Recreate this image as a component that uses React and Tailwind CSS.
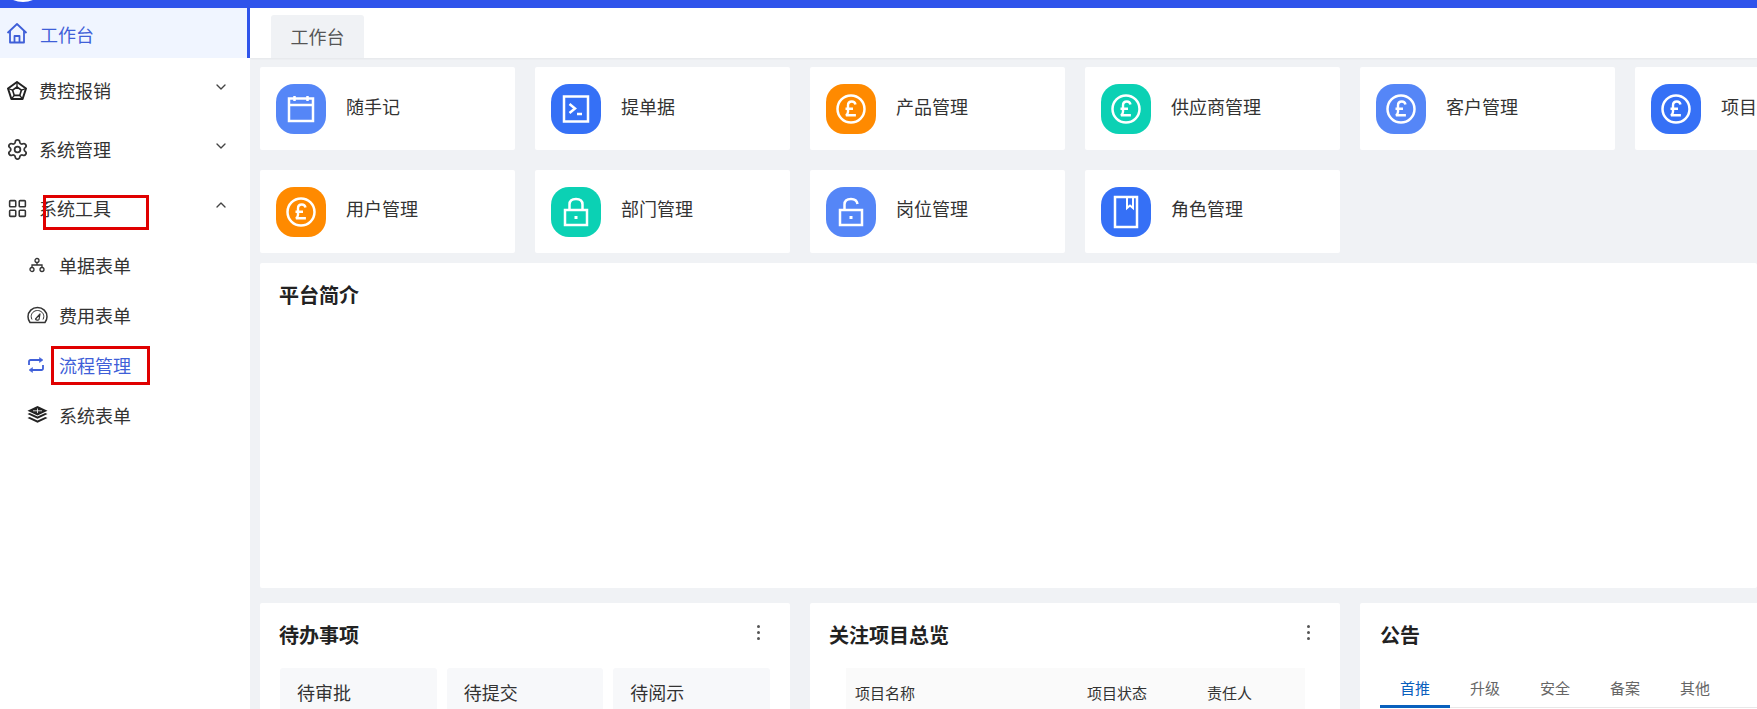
import { ChevronDown, ChevronUp, Settings, LayoutGrid } from "lucide-react"

const font = { fontFamily: '"Noto Sans CJK SC", "Noto Sans", sans-serif' }

function PoundIcon() {
  return (
    <svg width="34" height="34" viewBox="0 0 34 34" fill="none" stroke="white">
      <circle cx="17" cy="17" r="13.5" strokeWidth="2.500" />
      <path d="M21.500 12.500c-.4-1.800-1.800-3-3.600-3-2.400 0-3.900 1.600-3.900 3.900v6.400c0 1.600-.7 2.700-2.100 3.400h10M11.500 16.800h7.500" strokeWidth="2.400" />
    </svg>
  )
}

function CalendarIcon() {
  return (
    <svg width="28" height="30" viewBox="0 0 28 30" fill="none" stroke="white" strokeWidth="2.500">
      <rect x="2" y="4.500" width="24" height="22.500" />
      <path d="M2 11h24M7.500 2v5M20.500 2v5" />
    </svg>
  )
}

function TerminalIcon() {
  return (
    <svg width="28" height="30" viewBox="0 0 28 30" fill="none" stroke="white" strokeWidth="2.500">
      <rect x="2" y="2.500" width="24" height="25" />
      <path d="M7.500 10l5.500 4.500-5.500 4.500M15 20h5" />
    </svg>
  )
}

function LockIcon() {
  return (
    <svg width="26" height="30" viewBox="0 0 26 30" fill="none" stroke="white" strokeWidth="2.500">
      <rect x="2" y="13" width="22" height="15" />
      <path d="M6.500 13V7.500C6.500 4 9 2 13 2s6.500 2 6.500 5.500V13" />
      <path d="M13 19v3" strokeWidth="3" />
    </svg>
  )
}

function UnlockIcon() {
  return (
    <svg width="26" height="30" viewBox="0 0 26 30" fill="none" stroke="white" strokeWidth="2.500">
      <rect x="2" y="13" width="22" height="15" />
      <path d="M6.500 13V7.500C6.500 4 9 2 13 2s6 1.500 6.500 5" />
      <path d="M13 19v3" strokeWidth="3" />
    </svg>
  )
}

function BookIcon() {
  return (
    <svg width="26" height="34" viewBox="0 0 26 34" fill="none" stroke="white" strokeWidth="2.500">
      <rect x="2" y="2" width="22" height="30" />
      <path d="M14 2v11l3-2.500 3 2.500V2" strokeWidth="2" />
    </svg>
  )
}

function HomeIcon() {
  return (
    <svg width="22" height="22" viewBox="0 0 22 22" fill="none" stroke="currentColor" strokeWidth="1.800" strokeLinejoin="round">
      <path d="M1.500 11L11 2l9.500 9" />
      <path d="M4 9v11.500h14V9" />
      <path d="M8.500 20.500v-6.500h5v6.500" />
    </svg>
  )
}

function PentagonIcon() {
  return (
    <svg width="20" height="20" viewBox="0 0 20 20" fill="none" stroke="#222" strokeWidth="2" strokeLinejoin="round">
      <path d="M10 1l9 6.500-3.400 10.500H4.400L1 7.500z" />
      <path d="M10 6l4.400 3.200-1.700 5.200H7.300L5.600 9.200z" strokeWidth="1.600" />
      <path d="M10 1v5M19 7.500l-4.600 1.700M15.600 18l-2.900-3.600M4.400 18l2.900-3.600M1 7.500l4.600 1.700" strokeWidth="1.300" />
    </svg>
  )
}

function NodesIcon() {
  return (
    <svg width="16" height="16" viewBox="0 0 16 16" fill="none" stroke="#333" strokeWidth="1.300" className="ml-[2px]">
      <circle cx="8" cy="3.500" r="2" />
      <circle cx="3" cy="12.500" r="2" />
      <circle cx="13" cy="12.500" r="2" />
      <path d="M8 5.500V8M3 10.500V8h10v2.500" />
    </svg>
  )
}

function GaugeIcon() {
  return (
    <svg width="21" height="18" viewBox="0 0 21 18" fill="none" stroke="#333" strokeWidth="1.500" strokeLinejoin="round">
      <path d="M3 16.500C1.700 14.800 1 13 1 10.800 1 5.500 5.200 1.500 10.500 1.500S20 5.500 20 10.800c0 2.200-.7 4-2 5.700z" />
      <path d="M5 13.500c-.5-1-.8-2-.8-3 0-3.400 2.800-6 6.300-6s6.300 2.600 6.300 6c0 1-.3 2-.8 3" strokeWidth="1" />
      <path d="M8.500 13l4.500-5-1 5.500c-.6 1-3.200.8-3.500-.5z" strokeWidth="1.200" />
    </svg>
  )
}

function LoopIcon() {
  return (
    <svg width="18" height="18" viewBox="0 0 18 18" fill="none" stroke="currentColor" strokeWidth="1.800">
      <path d="M2 9V5.500A1.500 1.500 0 013.500 4H13" />
      <path d="M16 9v3.500a1.500 1.500 0 01-1.500 1.500H5" />
      <path d="M12.500 1.500L16 4l-3.500 2.500z" fill="currentColor" strokeWidth="0.500" />
      <path d="M5.500 11.500L2 14l3.500 2.500z" fill="currentColor" strokeWidth="0.500" />
    </svg>
  )
}

function StackIcon() {
  return (
    <svg width="21" height="19" viewBox="0 0 21 19" fill="#222">
      <path d="M10.500 0l10 4.800-10 4.800L.5 4.800z" />
      <path d="M6 4.800h9M10.500 2.500v4.600" stroke="white" strokeWidth="0.800" />
      <path d="M.5 8l2.200-1.100 7.800 3.700 7.800-3.700L20.500 8l-10 4.800z" />
      <path d="M.5 12l2.200-1.100 7.800 3.700 7.800-3.700 2.200 1.100-10 4.800z" />
    </svg>
  )
}

const shortcuts = [
  [
    { name: "随手记", bg: "bg-[#5586f7]", icon: <CalendarIcon /> },
    { name: "提单据", bg: "bg-[#3570f6]", icon: <TerminalIcon /> },
    { name: "产品管理", bg: "bg-[#ff8a00]", icon: <PoundIcon /> },
    { name: "供应商管理", bg: "bg-[#0bd1b4]", icon: <PoundIcon /> },
    { name: "客户管理", bg: "bg-[#5586f7]", icon: <PoundIcon /> },
    { name: "项目管理", bg: "bg-[#3570f6]", icon: <PoundIcon /> },
  ],
  [
    { name: "用户管理", bg: "bg-[#ff8a00]", icon: <PoundIcon /> },
    { name: "部门管理", bg: "bg-[#0bd1b4]", icon: <LockIcon /> },
    { name: "岗位管理", bg: "bg-[#5586f7]", icon: <UnlockIcon /> },
    { name: "角色管理", bg: "bg-[#3570f6]", icon: <BookIcon /> },
  ],
]

function MenuRow({ icon, label, open }) {
  return (
    <div className="h-[59px] flex items-center pl-[7px] pr-[21px] text-[18px] text-[#333]">
      <span className="w-[32px] flex">{icon}</span>
      <span className="flex-1">{label}</span>
      {open ? (
        <ChevronUp size={16} className="-mt-[8px] text-[#444]" />
      ) : (
        <ChevronDown size={16} className="-mt-[8px] text-[#444]" />
      )}
    </div>
  )
}

function SubRow({ icon, label, active }) {
  return (
    <div className={`h-[50px] flex items-center pl-[27px] text-[18px] ${active ? "text-[#3f5fd8]" : "text-[#333]"}`}>
      <span className="w-[32px] flex">{icon}</span>
      <span>{label}</span>
    </div>
  )
}

function Dots() {
  return (
    <div className="flex flex-col gap-[3px] mt-[-6px]">
      <span className="w-[3px] h-[3px] rounded-full bg-[#555]"></span>
      <span className="w-[3px] h-[3px] rounded-full bg-[#555]"></span>
      <span className="w-[3px] h-[3px] rounded-full bg-[#555]"></span>
    </div>
  )
}

export default function App() {
  return (
    <div className="relative w-[1757px] h-[709px] overflow-hidden flex flex-col bg-white" style={font}>
      <div className="h-[8px] shrink-0 bg-[#2f54eb] flex items-start overflow-hidden">
        <div className="ml-[-3px] -mt-[50px] w-[52px] h-[52px] shrink-0 rounded-full bg-white"></div>
      </div>
      <div className="flex flex-1 min-h-0">
        <aside className="w-[250px] shrink-0 bg-white">
          <div className="h-[50px] flex items-center pl-[6px] bg-[#f0f5ff] border-r-[3px] border-[#2f54eb] text-[18px] text-[#3f5fd8]">
            <span className="w-[34px] flex">
              <HomeIcon />
            </span>
            <span className="pt-[2px]">工作台</span>
          </div>
          <div className="pt-[3px]">
            <MenuRow icon={<PentagonIcon />} label="费控报销" />
            <MenuRow icon={<Settings size={23} strokeWidth={1.8} className="-ml-[1px]" />} label="系统管理" />
            <MenuRow icon={<LayoutGrid size={21} strokeWidth={1.8} />} label="系统工具" open />
          </div>
          <div className="pt-[2px]">
            <SubRow icon={<NodesIcon />} label="单据表单" />
            <SubRow icon={<GaugeIcon />} label="费用表单" />
            <SubRow icon={<LoopIcon />} label="流程管理" active />
            <SubRow icon={<StackIcon />} label="系统表单" />
          </div>
        </aside>
        <main className="flex-1 min-w-0 bg-[#f0f2f5] overflow-hidden">
          <div className="h-[50px] bg-white pt-[7px] pl-[21px] shadow-[0_1px_2px_rgba(0,0,0,0.05)]">
            <div className="w-[93px] h-[43px] flex items-center justify-center rounded-t-[3px] bg-[#f0f2f5] text-[18px] text-[#555]">
              工作台
            </div>
          </div>
          <div className="pl-[10px] pt-[9px]">
            <div className="flex flex-col gap-[20px]">
              {shortcuts.map((row, i) => (
                <div key={i} className="flex gap-[20px]">
                  {row.map((item) => (
                    <div key={item.name} className="w-[255px] h-[83px] shrink-0 flex items-center gap-[20px] pl-[16px] rounded-[2px] bg-white">
                      <div className={`w-[50px] h-[50px] flex items-center justify-center rounded-[18px] ${item.bg}`}>
                        {item.icon}
                      </div>
                      <span className={`${i === 0 ? "pb-[4px]" : "pb-[7px]"} text-[18px] text-[#333]`}>{item.name}</span>
                    </div>
                  ))}
                </div>
              ))}
            </div>
            <div className="mt-[10px] h-[325px] pl-[19px] pt-[19px] bg-white rounded-[2px]">
              <h3 className="text-[20px] font-bold leading-[26px] text-[#222]">平台简介</h3>
            </div>
            <div className="mt-[15px] flex gap-[20px]">
              <div className="w-[530px] h-[200px] shrink-0 bg-white rounded-[2px] px-[20px] pt-[19px]">
                <div className="flex items-center justify-between pr-[10px]">
                  <h3 className="-ml-[1px] text-[20px] font-bold leading-[26px] text-[#222]">待办事项</h3>
                  <Dots />
                </div>
                <div className="mt-[20px] flex gap-[10px]">
                  {["待审批", "待提交", "待阅示"].map((t) => (
                    <div key={t} className="w-[157px] h-[80px] pl-[17px] pt-[11px] rounded-[3px] bg-[#f7f8fa] text-[18px] text-[#333]">
                      {t}
                    </div>
                  ))}
                </div>
              </div>
              <div className="w-[530px] h-[200px] shrink-0 bg-white rounded-[2px] px-[20px] pt-[19px]">
                <div className="flex items-center justify-between pr-[10px]">
                  <h3 className="-ml-[1px] text-[20px] font-bold leading-[26px] text-[#222]">关注项目总览</h3>
                  <Dots />
                </div>
                <div className="mt-[20px] ml-[16px] w-[459px] h-[60px] pl-[9px] pt-[14px] flex bg-[#fafafa] text-[15px] text-[#333]">
                  <span className="w-[232px]">项目名称</span>
                  <span className="w-[120px]">项目状态</span>
                  <span>责任人</span>
                </div>
              </div>
              <div className="w-[530px] h-[200px] shrink-0 bg-white rounded-[2px] px-[20px] pt-[19px]">
                <h3 className="text-[20px] font-bold leading-[26px] text-[#222]">公告</h3>
                <div className="mt-[28px] h-[32px] flex border-b border-[#e8e8e8] text-[15px] leading-[24px] text-[#666]">
                  <span className="w-[70px] h-[32px] shrink-0 text-center text-[#0960bd] border-b-[3px] border-[#0960bd]">首推</span>
                  <span className="w-[70px] text-center">升级</span>
                  <span className="w-[70px] text-center">安全</span>
                  <span className="w-[70px] text-center">备案</span>
                  <span className="w-[70px] text-center">其他</span>
                </div>
              </div>
            </div>
          </div>
        </main>
      </div>
      <div className="absolute left-[43px] top-[195px] w-[106px] h-[35px] border-[3px] border-[#e00000]"></div>
      <div className="absolute left-[51px] top-[346px] w-[99px] h-[39px] border-[3px] border-[#e00000]"></div>
    </div>
  )
}
